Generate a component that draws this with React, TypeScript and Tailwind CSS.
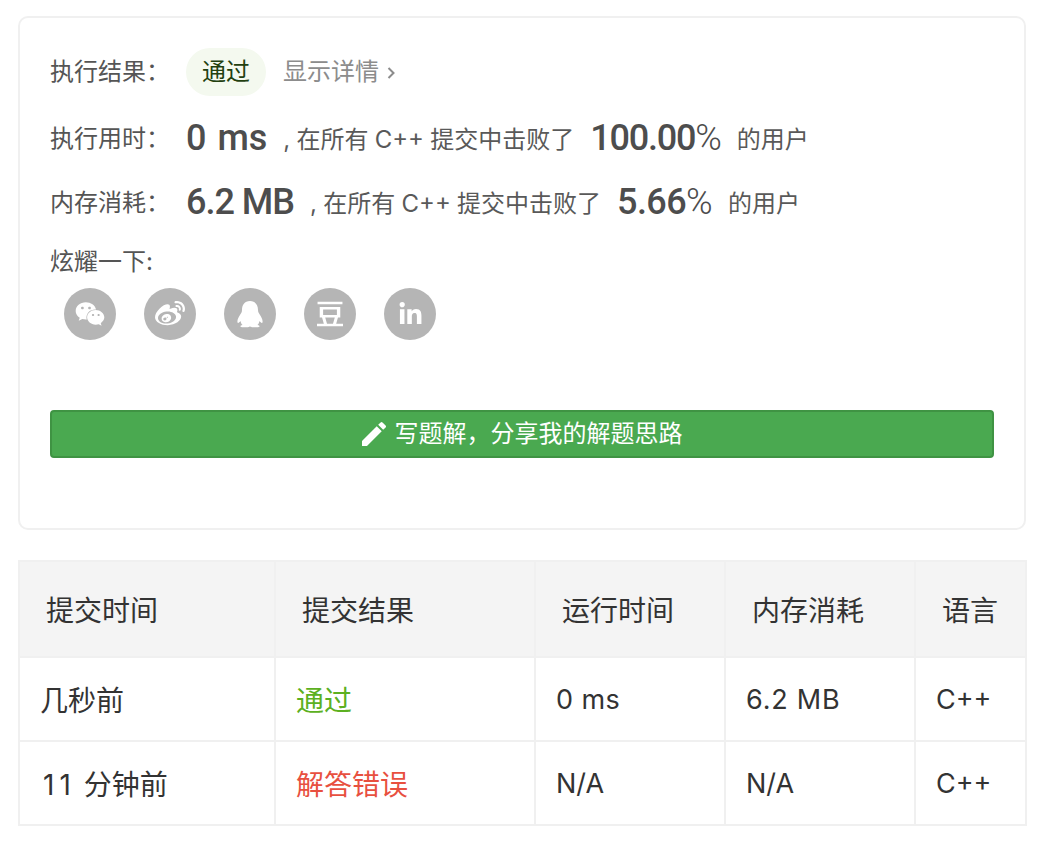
import { FaLinkedinIn, FaWeibo, FaWeixin } from "react-icons/fa";
import { MdEdit } from "react-icons/md";
import { SiDouban } from "react-icons/si";

const sans = "font-['Inter','Noto_Sans_CJK_SC',sans-serif]";
const big = "font-['Roboto',sans-serif] text-[36px] font-medium text-[#4d4d4d]";
const cell = "border-2 border-[#f0f0f0] pl-[20px] pt-[3px]";

function QqIcon() {
  return (
    <svg width="52" height="52" viewBox="0 0 52 52" fill="currentColor">
      <path d="M26 13C20.5 13 18 17 18 22C18 24 17 25.5 16 27C14.5 29.5 13 32 13.5 34.5C14 35.5 15.5 34.5 16.5 33C17 35 17.5 36 18.5 37C16 37.5 15.5 39 18 39.2L24 39.2C25 39.2 25.5 38.8 26 38.3C26.5 38.8 27 39.2 28 39.2L34 39.2C36.5 39 36 37.5 33.5 37C34.5 36 35 35 35.5 33C36.5 34.5 38 35.5 38.5 34.5C39 32 37.5 29.5 36 27C35 25.5 34 24 34 22C34 17 31.5 13 26 13Z" />
    </svg>
  );
}

const shareIcons = [
  { id: "wechat", icon: <FaWeixin size={30} /> },
  { id: "weibo", icon: <FaWeibo size={30} /> },
  { id: "qq", icon: <QqIcon /> },
  { id: "douban", icon: <SiDouban size={26} /> },
  { id: "linkedin", icon: <FaLinkedinIn size={25} /> },
];

const rows = [
  {
    time: "几秒前",
    result: "通过",
    color: "text-[#5cb021]",
    runtime: "0 ms",
    runtimeClass: "tracking-[0.4px]",
    memory: "6.2 MB",
    memoryClass: "tracking-[0.8px]",
    lang: "C++",
  },
  {
    time: <><span className="ml-[3px] tracking-[5px]">11</span> 分钟前</>,
    result: "解答错误",
    color: "text-[#e8503f]",
    runtime: "N/A",
    runtimeClass: "",
    memory: "N/A",
    memoryClass: "",
    lang: "C++",
  },
];

type StatProps = {
  label: string;
  value: string;
  valueClass: string;
  percent: string;
  percentClass: string;
};

function Stat({ label, value, valueClass, percent, percentClass }: StatProps) {
  return (
    <div className="flex items-center h-[48px] mt-[16px]">
      <span className="w-[136px] shrink-0 mt-[2px] text-[#555]">{label}</span>
      <span className={`${big} ${valueClass}`}>{value}</span>
      <span className="ml-[16px] mt-[4px] text-[#595959] whitespace-pre [word-spacing:-0.5px]">, 在所有 C++ 提交中击败了</span>
      <span className={`ml-[16px] ${big} ${percentClass}`}>
        {percent}
        <span className="font-light">%</span>
      </span>
      <span className="ml-[16px] mt-[4px] text-[#595959]">的用户</span>
    </div>
  );
}

export default function App() {
  return (
    <div className={`${sans} w-[1042px] h-[842px] bg-white pl-[18px] pr-[16px] pt-[16px] text-[24px] overflow-hidden`}>
      {/* Result card */}
      <div className="h-[514px] border-2 border-[#f0f0f0] rounded-[10px] px-[30px] pt-[30px]">
        <div className="flex items-center h-[48px]">
          <span className="w-[136px] shrink-0 text-[#555]">执行结果：</span>
          <span className="w-[80px] h-[48px] rounded-full bg-[#f4f9ef] text-[#22400f] flex items-center justify-center">通过</span>
          <span className="ml-[17px] text-[#8c8c8c]">显示详情</span>
          <svg className="ml-[8px] mt-[2px]" width="9" height="14" viewBox="0 0 9 14" fill="none" stroke="#8c8c8c" strokeWidth="2">
            <path d="M1.5 2l5 5-5 5" />
          </svg>
        </div>
        <div className="h-[2px]" />
        <Stat label="执行用时：" value="0 ms" valueClass="[word-spacing:2px]" percent="100.00" percentClass="tracking-[-1.2px]" />
        <Stat label="内存消耗：" value="6.2 MB" valueClass="tracking-[-1px]" percent="5.66" percentClass="tracking-[-0.6px]" />

        <div className="mt-[18px] text-[#555] leading-[36px]">炫耀一下:</div>
        <div className="flex gap-[28px] ml-[14px] mt-[8px]">
          {shareIcons.map((s) => (
            <div key={s.id} className="w-[52px] h-[52px] rounded-full bg-[#b5b5b5] text-white flex items-center justify-center">
              {s.icon}
            </div>
          ))}
        </div>

        <button className="mt-[70px] w-[944px] h-[48px] rounded-[4px] bg-[#4aa950] border-2 border-[#3f9343] text-white flex items-center justify-center gap-[5px] pr-[4px]">
          <MdEdit size={32} />
          <span>写题解，分享我的解题思路</span>
        </button>
      </div>

      {/* Submissions */}
      <table className="mt-[30px] w-[1007px] table-fixed border-collapse border-2 border-[#f0f0f0] text-[28px] text-[#333]">
        <colgroup>
          <col className="w-[256px]" />
          <col className="w-[260px]" />
          <col className="w-[190px]" />
          <col className="w-[190px]" />
          <col className="w-[111px]" />
        </colgroup>
        <thead>
          <tr className="h-[96px] bg-[#f4f4f4]">
            {["提交时间", "提交结果", "运行时间", "内存消耗", "语言"].map((h) => (
              <th key={h} className="border-2 border-[#f0f0f0] pl-[26px] pt-[3px] text-left font-normal">{h}</th>
            ))}
          </tr>
        </thead>
        <tbody>
          {rows.map((r) => (
            <tr key={r.result} className="h-[84px]">
              <td className={cell}>{r.time}</td>
              <td className={`${cell} ${r.color}`}>{r.result}</td>
              <td className={`${cell} text-[27px] ${r.runtimeClass}`}>{r.runtime}</td>
              <td className={`${cell} text-[27px] ${r.memoryClass}`}>{r.memory}</td>
              <td className={`${cell} text-[27px]`}>{r.lang}</td>
            </tr>
          ))}
        </tbody>
      </table>
    </div>
  );
}
